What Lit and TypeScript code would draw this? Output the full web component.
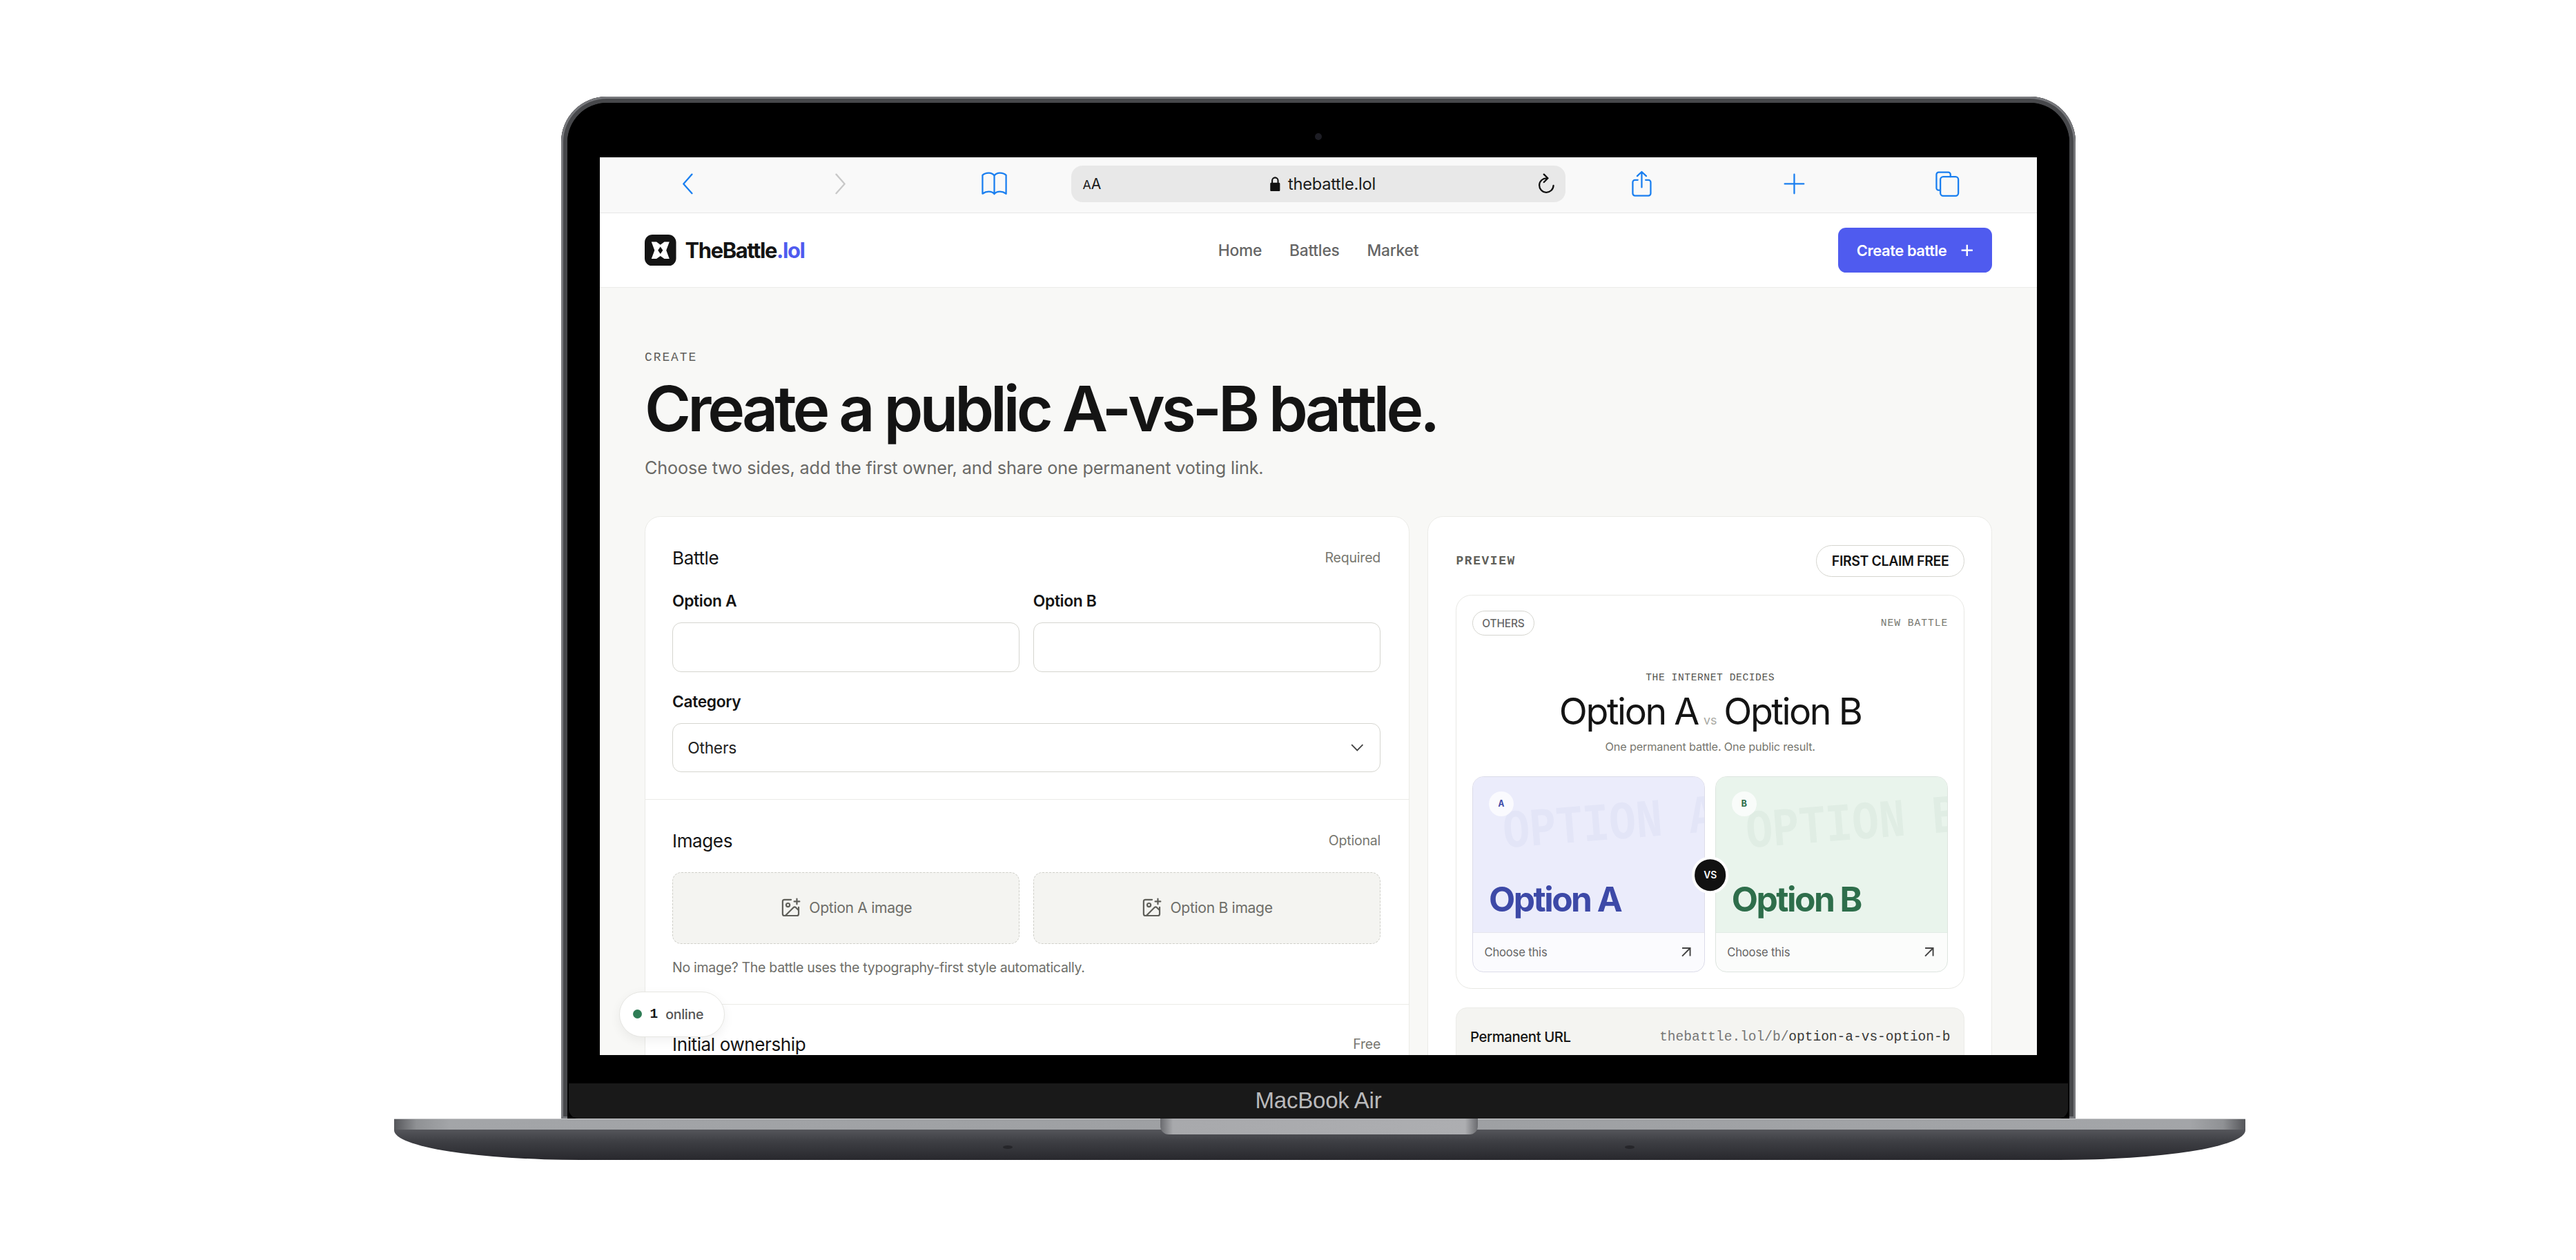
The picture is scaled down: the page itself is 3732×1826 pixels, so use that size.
import { LitElement, html, css, svg } from "lit";
import { customElement } from "lit/decorators.js";

const imgPlus = svg`<path d="M16 5h6M19 2v6M21 11.5V19a2 2 0 0 1-2 2H5a2 2 0 0 1-2-2V5a2 2 0 0 1 2-2h7.5M21 15l-3.09-3.09a2 2 0 0 0-2.82 0L6 21"/><circle cx="9" cy="9" r="2"/>`;
const arrow = svg`<path d="M7 7h10v10M7 17 17 7"/>`;

@customElement("app-root")
export class AppRoot extends LitElement {
  static styles = css`
    :host { display: block; width: 3732px; height: 1826px; background: #fff; overflow: hidden; padding-top: 140px; box-sizing: border-box; font-family: Inter, "Liberation Sans", sans-serif; color: #141414; }
    * { box-sizing: border-box; }
    .device { width: 2682px; margin-left: 571px; }
    .lid { position: relative; width: 2194px; height: 1481px; margin-left: 242px; background: #000; border-radius: 66px 66px 0 0; padding: 88px 56px 0; overflow: hidden;
      box-shadow: inset 0 0 0 3px #77787c, inset 0 0 0 9px #47484b; }
    .lid::before { content: ""; position: absolute; left: 9px; right: 9px; top: 9px; bottom: 0; background: #000; border-radius: 58px 58px 0 0; }
    .camera { position: absolute; left: 1092px; top: 53px; width: 10px; height: 10px; border-radius: 50%; background: #1d1d24; z-index: 1; }
    .chin { position: absolute; left: 11px; right: 11px; bottom: 0; height: 51px; background: #191919; border-radius: 0 0 14px 14px; display: flex; align-items: center; justify-content: center; color: #b9b9bb; font: 400 33px "Liberation Sans", sans-serif; letter-spacing: -0.2px; z-index: 1; padding-bottom: 1px; }
    .screen { position: relative; z-index: 1; width: 1280px; height: 800px; zoom: 1.6266; background: #f8f8f6; overflow: hidden; display: flex; flex-direction: column; }

    .toolbar { flex: none; height: 50px; background: #f9f9f9; border-bottom: 1px solid #e6e6e6; padding: 0 0 2px 10px; display: grid; grid-template-columns: 136.5px 136.5px 136.5px 440.5px 136px 136px 136px; align-items: center; justify-items: center; }
    .toolbar svg { fill: none; stroke: #1a7ff0; stroke-width: 1.4; stroke-linecap: round; stroke-linejoin: round; display: block; }
    .toolbar svg.off { stroke: #c8c8c8; }
    .addr { justify-self: start; width: 440px; height: 33px; margin-left: 0.5px; background: #e8e8e8; border-radius: 10px; display: flex; align-items: center; position: relative; padding: 0 9px 0 10px; font-size: 14.5px; letter-spacing: -0.01em; color: #1a1a1a; }
    .aa { font-size: 11px; letter-spacing: 0; } .aa b { font-weight: 400; font-size: 13px; }
    .url { position: absolute; left: 0; right: 0; text-align: center; display: flex; justify-content: center; align-items: center; gap: 7px; padding-left: 8px; }
    .addr svg.reload { stroke: #111; margin-left: auto; }
    .toolbar svg.lock { width: 9px; height: 13px; fill: #111; stroke: none; }

    .nav { flex: none; height: 66px; background: #fff; border-bottom: 1px solid #ecece9; padding: 0 40px; display: grid; grid-template-columns: 1fr auto 1fr; align-items: center; }
    .brand { display: flex; align-items: center; gap: 8px; font-size: 19px; font-weight: 700; letter-spacing: -0.045em; }
    .brand em { font-style: normal; color: #4f5bef; }
    .logo { width: 28px; height: 28px; display: block; }
    .links { display: flex; gap: 24.5px; font-size: 14px; font-weight: 500; color: #666; letter-spacing: -0.01em; }
    .cta { justify-self: end; height: 40px; width: 137px; background: #4f5bef; color: #fff; border-radius: 7px; display: flex; align-items: center; justify-content: center; gap: 12px; font-size: 13.5px; font-weight: 600; letter-spacing: -0.02em; }
    .cta svg { width: 12px; height: 12px; stroke: #fff; stroke-width: 1.5; fill: none; }

    .page { flex: 1; min-height: 0; padding: 55.5px 40px 0; position: relative; }
    .eyebrow { font: 400 11px/14px "Liberation Mono", monospace; letter-spacing: 1.2px; color: #5f5f5b; }
    h1 { margin: 9px 0 0; font-size: 56px; line-height: 60px; font-weight: 600; letter-spacing: -0.055em; color: #141414; }
    .lede { margin: 11.5px 0 0; font-size: 15.5px; line-height: 22px; color: #6a6a67; letter-spacing: -0.005em; }
    .cols { display: grid; grid-template-columns: 681px 503px; gap: 16px; margin-top: 32px; }
    .card { background: #fff; border: 1px solid #ebebe7; border-radius: 14px; }
    .sec { padding: 25px 25px 24px 24px; border-bottom: 1px solid #ebebe7; }
    .sec.first { padding-bottom: 23.5px; }
    .sec.second { padding-top: 25.5px; padding-bottom: 24.5px; }
    .sec:last-child { border-bottom: 0; padding-top: 24.5px; }
    .sec-head { display: flex; justify-content: space-between; align-items: center; height: 22px; font-size: 16px; letter-spacing: -0.015em; font-weight: 400; }
    .sec-head span { font-size: 12px; color: #77776f; letter-spacing: -0.01em; }
    .two { display: grid; grid-template-columns: 1fr 1fr; gap: 12px; }
    .field-top { margin-top: 20px; }
    label { display: block; font-size: 14px; line-height: 16px; font-weight: 600; letter-spacing: -0.015em; color: #141414; margin-bottom: 11px; }
    .input { height: 44px; background: #fff; border: 1px solid #d5d5cf; border-radius: 8px; display: flex; align-items: center; justify-content: space-between; padding: 0 13px; font-size: 14px; letter-spacing: -0.01em; color: #222; }
    .input svg { width: 20px; height: 20px; fill: none; stroke: #444; stroke-width: 1.4; margin-right: -3px; }
    .cat { margin-top: 18.5px; }
    .two.drop { margin-top: 17px; }
    .drop > div { height: 64px; background: #f4f4f1; border: 1px dashed #cfcfc9; border-radius: 8px; display: flex; align-items: center; justify-content: center; gap: 7px; font-size: 13px; color: #6e6e69; letter-spacing: -0.015em; }
    .drop svg { width: 19px; height: 19px; fill: none; stroke: #5f5f5a; stroke-width: 1.7; stroke-linecap: round; stroke-linejoin: round; }
    .note { margin: 13px 0 0; font-size: 12px; line-height: 16px; color: #6e6e69; letter-spacing: -0.015em; }

    .pv { padding: 25px 24px 0 25px; }
    .pv-head { display: flex; justify-content: space-between; align-items: center; height: 28px; }
    .mono { font-family: "Liberation Mono", monospace; }
    .pv-label { font-size: 11px; letter-spacing: 1px; color: #5f5f5a; font-weight: 700; }
    .claim { height: 28px; width: 132px; border: 1px solid #d5d5cf; border-radius: 14px; background: #fff; font-size: 12px; font-weight: 600; letter-spacing: -0.02em; display: flex; align-items: center; justify-content: center; }
    .battle { margin-top: 16px; height: 351px; border: 1px solid #e8e8e4; border-radius: 14px; padding: 14px 14px; background: #fff; }
    .b-top { display: flex; justify-content: space-between; align-items: center; height: 22px; }
    .tag { height: 22px; width: 55px; border: 1px solid #d5d5cf; border-radius: 11px; font-size: 9.5px; color: #666; font-weight: 500; letter-spacing: -0.01em; display: flex; align-items: center; justify-content: center; }
    .new { font-size: 9px; letter-spacing: 0.6px; color: #77776f; }
    .b-title { text-align: center; margin-top: 32px; }
    .decide { font-size: 9px; line-height: 12px; letter-spacing: 0.35px; color: #55554f; }
    .versus { font-size: 33px; line-height: 34px; letter-spacing: -0.045em; font-weight: 400; margin-top: 6px; color: #141414; }
    .versus small { font-size: 11px; color: #a9a9a4; letter-spacing: 0; margin: 0 6px 0 5px; }
    .sub { font-size: 10px; line-height: 14px; color: #77776f; margin-top: 0.2px; letter-spacing: -0.01em; }
    .tiles { position: relative; display: grid; grid-template-columns: 1fr 1fr; gap: 9px; margin-top: 19px; }
    .tile { height: 175px; border-radius: 10px; overflow: hidden; border: 1px solid; display: flex; flex-direction: column; }
    .tile.a { border-color: #dcdce9; background: #fbfbfe; } .tile.b { border-color: #dde5df; background: #fbfcfb; }
    .vis { position: relative; height: 139px; overflow: hidden; display: flex; align-items: flex-end; padding: 0 14px 11px; border-bottom: 1px solid #e6e6ee; }
    .a .vis { background: #ebecfb; } .b .vis { background: #e9f4ec; border-bottom-color: #e2ece5; }
    .badge { position: absolute; left: 14px; top: 13px; width: 22px; height: 22px; border-radius: 50%; background: rgba(255,255,255,.72); display: flex; align-items: center; justify-content: center; font-size: 8.5px; font-weight: 700; z-index: 1; }
    .a .badge, .a .name { color: #3d49a7; } .b .badge, .b .name { color: #2e6e4b; }
    .ghost { position: absolute; left: 27px; top: 29px; white-space: nowrap; font-size: 39.5px; font-weight: 700; line-height: 44px; transform: rotate(-4.5deg) scaleY(1.22); transform-origin: 0 50%; }
    .a .ghost { color: rgba(70,90,170,.045); } .b .ghost { color: rgba(40,100,70,.045); }
    .name { font-size: 30.5px; line-height: 36px; font-weight: 700; letter-spacing: -0.05em; position: relative; }
    .foot { flex: 1; display: flex; align-items: center; justify-content: space-between; padding: 0 10px; font-size: 10.2px; color: #666; letter-spacing: -0.01em; }
    .foot svg { width: 17px; height: 17px; fill: none; stroke: #444; stroke-width: 1.7; margin-right: -2px; }
    .vs { position: absolute; left: 50%; top: 88px; transform: translate(-50%, -50%); width: 33px; height: 33px; border-radius: 50%; background: #111; border: 2.5px solid #fff; color: #fff; font-size: 8.5px; font-weight: 600; display: flex; align-items: center; justify-content: center; z-index: 2; }
    .perm { margin-top: 17px; height: 60px; background: #f4f4f1; border: 1px solid #ecece8; border-radius: 10px; padding: 0 12px; display: flex; justify-content: space-between; align-items: flex-start; }
    .perm b { font-size: 12.5px; font-weight: 500; letter-spacing: -0.02em; line-height: 16px; margin-top: 18px; }
    .perm span { font-size: 12px; line-height: 16px; margin-top: 18px; color: #777; } .perm i { font-style: normal; color: #3a3a38; }

    .online { position: absolute; left: 17px; bottom: 16px; height: 41px; width: 94px; background: #fff; border: 1px solid #e6e6e2; border-radius: 21px; box-shadow: 0 3px 10px rgba(0,0,0,.06); display: flex; align-items: center; padding-left: 12px; gap: 7px; font-size: 12px; font-weight: 500; color: #555; z-index: 5; letter-spacing: -0.015em; }
    .dot { width: 8px; height: 8px; border-radius: 50%; background: #2e7d55; }
    .online b { font: 700 12px "Liberation Mono", monospace; color: #141414; }

    .base { position: relative; height: 60px; background: linear-gradient(#55565b 26%, #3e3f44 55%, #28282d 100%); border-radius: 0 0 270px 270px / 0 0 43px 43px; }
    .strip { height: 16px; background: linear-gradient(90deg, #55565a 0, #8f9194 1.2%, #a3a5a8 3%, #9d9fa2 50%, #a3a5a8 97%, #8f9194 98.8%, #55565a 100%); box-shadow: inset 0 1px 0 #c9cacc; }
    .notch { position: absolute; left: 1110px; top: 0; width: 460px; height: 23px; border-radius: 0 0 12px 12px; background: linear-gradient(90deg, #6a6b6f 0, #a8a9ac 4%, #adaeb1 96%, #6a6b6f 100%); }
    .foot-dot { position: absolute; top: 39px; width: 14px; height: 5px; border-radius: 50%; background: #26262a; }
  `;

  tile(cls: string, l: string) {
    return html`<div class="tile ${cls}">
      <div class="vis">
        <span class="badge mono">${l}</span>
        <span class="ghost mono">OPTION ${l}</span>
        <span class="name">Option ${l}</span>
      </div>
      <div class="foot">Choose this <svg viewBox="0 0 24 24">${arrow}</svg></div>
    </div>`;
  }

  render() {
    return html`<div class="device">
      <div class="lid">
        <div class="camera"></div>
        <div class="screen">
          <div class="toolbar">
            <svg width="11" height="19" viewBox="0 0 11 19"><path d="M9.5 1 2 9.5 9.5 18"/></svg>
            <svg class="off" width="11" height="19" viewBox="0 0 11 19"><path d="M1.5 1 9 9.5 1.5 18"/></svg>
            <svg width="24" height="21" viewBox="0 0 24 21"><path d="M12 3.5C11 1.8 9.5 1 7 1 4.5 1 3 1.5 1.5 3v16.5C3.5 18 5 17.6 7 17.6c2 0 4 .8 5 2.2 1-1.4 3-2.2 5-2.2 2 0 3.500.4 5.500 1.900V3C21 1.500 19.500 1 17 1c-2.500 0-4 .8-5 2.500ZM12 3.500v16.300"/></svg>
            <div class="addr">
              <span class="aa">A<b>A</b></span>
              <span class="url"><svg class="lock" viewBox="0 0 8 12"><path fill-rule="evenodd" d="M1 5V3.200a3 3 0 0 1 6 0V5h.2A.8.8 0 0 1 8 5.800v5.400a.8.8 0 0 1-.8.800H.8a.8.8 0 0 1-.8-.8V5.800A.8.8 0 0 1 .8 5H1Zm1.200 0h3.600V3.200a1.800 1.800 0 0 0-3.600 0V5Z"/></svg>thebattle.lol</span>
              <svg class="reload" width="16" height="19" viewBox="0 0 16 19"><path d="M8.500 4.500A6.300 6.300 0 1 0 14.500 11M6 1l3.500 3.500L6 8"/></svg>
            </div>
            <svg width="19" height="24" viewBox="0 0 19 24"><path d="M6 8.500H3.500a2 2 0 0 0-2 2v10a2 2 0 0 0 2 2h12a2 2 0 0 0 2-2v-10a2 2 0 0 0-2-2H13M9.500 15V1.500M5.500 5l4-3.800 4 3.800"/></svg>
            <svg width="19" height="19" viewBox="0 0 19 19"><path d="M9.500 1v17M1 9.500h17"/></svg>
            <svg width="22" height="23" viewBox="0 0 22 23"><path d="M4.500 17H3.500a2 2 0 0 1-2-2V3a2 2 0 0 1 2-2h8.500a2 2 0 0 1 2 2v2"/><rect x="5" y="5" width="16" height="17" rx="2.500"/></svg>
          </div>
          <div class="nav">
            <div class="brand">
              <svg class="logo" viewBox="0 0 28 28"><rect width="28" height="28" rx="7" fill="#141414"/><path fill="#fff" fill-rule="evenodd" d="M6 6.500H10.500L14 9 17.500 6.500H22L19.200 14 22 21.500H17.500L14 19 10.500 21.500H6L8.800 14ZM14 10.800 11.800 14 14 17.200 16.200 14Z"/></svg>
              <span>TheBattle<em>.lol</em></span>
            </div>
            <div class="links"><span>Home</span><span>Battles</span><span>Market</span></div>
            <div class="cta">Create battle <svg viewBox="0 0 12 12"><path d="M6 1v10M1 6h10"/></svg></div>
          </div>
          <div class="page">
            <div class="eyebrow">CREATE</div>
            <h1>Create a public A-vs-B battle.</h1>
            <p class="lede">Choose two sides, add the first owner, and share one permanent voting link.</p>
            <div class="cols">
              <div class="card">
                <div class="sec first">
                  <div class="sec-head">Battle <span>Required</span></div>
                  <div class="two field-top">
                    <div><label>Option A</label><div class="input"></div></div>
                    <div><label>Option B</label><div class="input"></div></div>
                  </div>
                  <div class="cat"><label>Category</label><div class="input">Others <svg viewBox="0 0 24 24"><path d="m6 9 6 6 6-6"/></svg></div></div>
                </div>
                <div class="sec second">
                  <div class="sec-head">Images <span>Optional</span></div>
                  <div class="two drop">
                    <div><svg viewBox="0 0 24 24">${imgPlus}</svg>Option A image</div>
                    <div><svg viewBox="0 0 24 24">${imgPlus}</svg>Option B image</div>
                  </div>
                  <p class="note">No image? The battle uses the typography-first style automatically.</p>
                </div>
                <div class="sec">
                  <div class="sec-head">Initial ownership <span>Free</span></div>
                </div>
              </div>
              <div class="card pv">
                <div class="pv-head"><span class="pv-label mono">PREVIEW</span><span class="claim">FIRST CLAIM FREE</span></div>
                <div class="battle">
                  <div class="b-top"><span class="tag">OTHERS</span><span class="new mono">NEW BATTLE</span></div>
                  <div class="b-title">
                    <div class="decide mono">THE INTERNET DECIDES</div>
                    <div class="versus">Option A<small>vs</small>Option B</div>
                    <div class="sub">One permanent battle. One public result.</div>
                  </div>
                  <div class="tiles">
                    ${this.tile("a", "A")}
                    ${this.tile("b", "B")}
                    <div class="vs">VS</div>
                  </div>
                </div>
                <div class="perm"><b>Permanent URL</b><span class="mono">thebattle.lol/b/<i>option-a-vs-option-b</i></span></div>
              </div>
            </div>
          </div>
          <div class="online"><span class="dot"></span><b>1</b><span>online</span></div>
        </div>
        <div class="chin">MacBook Air</div>
      </div>
      <div class="base">
        <div class="strip"></div>
        <div class="notch"></div>
        <span class="foot-dot" style="left:882px"></span>
        <span class="foot-dot" style="left:1783px"></span>
      </div>
    </div>`;
  }
}
